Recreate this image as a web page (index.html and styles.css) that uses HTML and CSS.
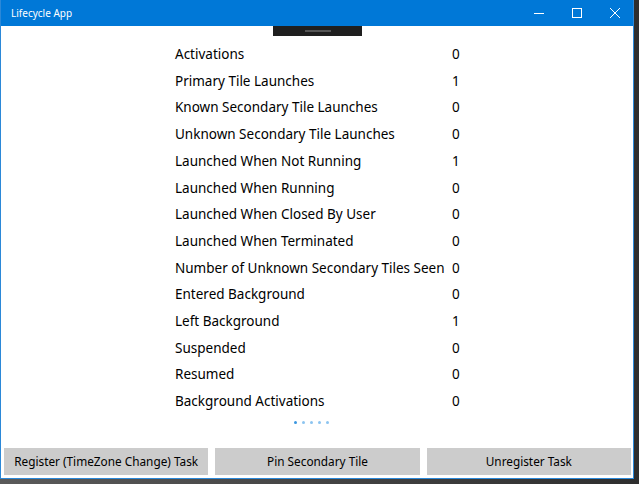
FILE: index.html
```html
<!DOCTYPE html>
<html lang="en">
<head>
    <meta charset="UTF-8">
    <title>Lifecycle App</title>
    <link rel="stylesheet" href="styles.css">
</head>
<body>
    <div class="window">
        <div class="titlebar">
            <span class="title">Lifecycle App</span>
            <div class="controls">
                <span class="ctl">
                    <svg width="12" height="12" viewBox="0 0 12 12"><path d="M1 6.5h10" stroke="#fff" stroke-width="1"/></svg>
                </span>
                <span class="ctl">
                    <svg width="12" height="12" viewBox="0 0 12 12"><rect x="1.5" y="1.5" width="9" height="9" fill="none" stroke="#fff" stroke-width="1"/></svg>
                </span>
                <span class="ctl">
                    <svg width="12" height="12" viewBox="0 0 12 12"><path d="M1 1l10 10M11 1L1 11" stroke="#fff" stroke-width="1"/></svg>
                </span>
            </div>
        </div>

        <div class="content">
            <div class="handle"><span></span></div>

            <div class="stats">
                <span>Activations</span><span>0</span>
                <span>Primary Tile Launches</span><span>1</span>
                <span>Known Secondary Tile Launches</span><span>0</span>
                <span>Unknown Secondary Tile Launches</span><span>0</span>
                <span>Launched When Not Running</span><span>1</span>
                <span>Launched When Running</span><span>0</span>
                <span>Launched When Closed By User</span><span>0</span>
                <span>Launched When Terminated</span><span>0</span>
                <span>Number of Unknown Secondary Tiles Seen</span><span>0</span>
                <span>Entered Background</span><span>0</span>
                <span>Left Background</span><span>1</span>
                <span>Suspended</span><span>0</span>
                <span>Resumed</span><span>0</span>
                <span>Background Activations</span><span>0</span>
            </div>

            <div class="dots">
                <i class="on"></i><i></i><i></i><i></i><i></i>
            </div>

            <div class="buttons">
                <button>Register (TimeZone Change) Task</button>
                <button>Pin Secondary Tile</button>
                <button>Unregister Task</button>
            </div>
        </div>
    </div>
</body>
</html>
```

FILE: styles.css
```css
html, body {
    margin: 0;
    padding: 0;
}
body {
    width: 639px;
    height: 484px;
    background: linear-gradient(to right, #5a5a5a, #2e2e2e);
    font-family: "Noto Sans", "Open Sans", sans-serif;
    overflow: hidden;
}
.window {
    width: 632px;
    height: 478px;
    border: 1px solid #2b88d8;
    border-top: none;
    background: #fff;
    display: flex;
    flex-direction: column;
    overflow: hidden;
}
.titlebar {
    flex: none;
    height: 26px;
    background: #0078d7;
    color: #fff;
    display: flex;
    align-items: center;
    justify-content: space-between;
    margin: 0 -1px;
}
.title {
    font-size: 10px;
    padding-left: 11px;
}
.controls {
    display: flex;
    height: 100%;
}
.ctl {
    width: 38px;
    display: flex;
    align-items: center;
    justify-content: center;
}
.content {
    flex: 1;
    display: flex;
    flex-direction: column;
}
.handle {
    flex: none;
    align-self: flex-start;
    margin-left: 272px;
    width: 89px;
    height: 10px;
    background: #1f1f1f;
    display: flex;
    align-items: center;
    justify-content: center;
}
.handle span {
    width: 26px;
    height: 2px;
    background: #555;
}
.stats {
    display: grid;
    grid-template-columns: 277px auto;
    padding-left: 174px;
    padding-top: 5px;
    font-size: 13.5px;
    color: #000;
    line-height: 26.7px;
    white-space: nowrap;
}
.dots {
    flex: none;
    display: flex;
    gap: 5px;
    padding-left: 293px;
    margin-top: 6px;
    height: 4px;
}
.dots i {
    width: 3px;
    height: 3px;
    border-radius: 50%;
    background: #8cc4f0;
}
.dots i.on {
    background: #3a96e0;
}
.buttons {
    flex: none;
    display: flex;
    gap: 7px;
    padding: 0 2px 0 3px;
    margin-top: 23px;
}
.buttons button {
    flex: 1;
    height: 27px;
    border: none;
    background: #cccccc;
    font-family: inherit;
    font-size: 11.8px;
    color: #000;
    padding: 0;
}
```
